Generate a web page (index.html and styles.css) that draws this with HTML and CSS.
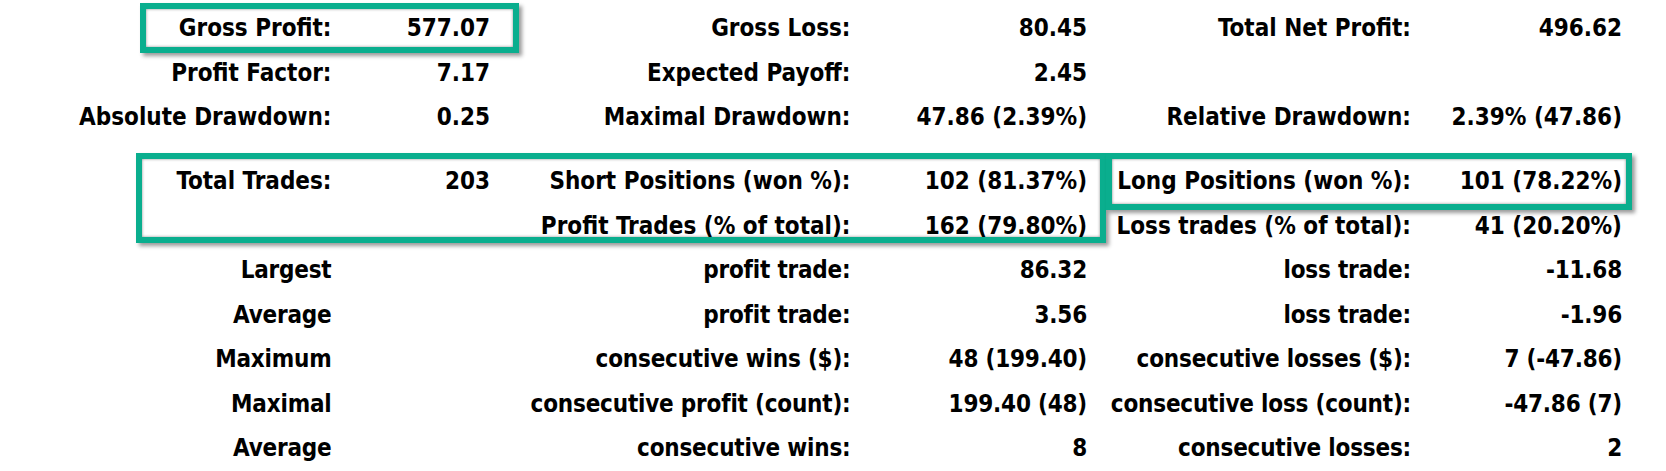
FILE: index.html
```html
<!DOCTYPE html>
<html>
<head>
<meta charset="utf-8">
<link rel="stylesheet" href="styles.css">
</head>
<body>
<div class="report">
  <div class="grid top">
    <div class="c">Gross Profit:</div><div class="c">577.07</div>
    <div class="c">Gross Loss:</div><div class="c">80.45</div>
    <div class="c">Total Net Profit:</div><div class="c">496.62</div>

    <div class="c">Profit Factor:</div><div class="c">7.17</div>
    <div class="c">Expected Payoff:</div><div class="c">2.45</div>
    <div class="c"></div><div class="c"></div>

    <div class="c">Absolute Drawdown:</div><div class="c">0.25</div>
    <div class="c">Maximal Drawdown:</div><div class="c">47.86 (2.39%)</div>
    <div class="c">Relative Drawdown:</div><div class="c">2.39% (47.86)</div>
  </div>
  <div class="grid bottom">
    <div class="c">Total Trades:</div><div class="c">203</div>
    <div class="c">Short Positions (won %):</div><div class="c">102 (81.37%)</div>
    <div class="c">Long Positions (won %):</div><div class="c">101 (78.22%)</div>

    <div class="c"></div><div class="c"></div>
    <div class="c">Profit Trades (% of total):</div><div class="c">162 (79.80%)</div>
    <div class="c">Loss trades (% of total):</div><div class="c">41 (20.20%)</div>

    <div class="c n">Largest</div><div class="c"></div>
    <div class="c n">profit trade:</div><div class="c n">86.32</div>
    <div class="c n">loss trade:</div><div class="c n">-11.68</div>

    <div class="c n">Average</div><div class="c"></div>
    <div class="c n">profit trade:</div><div class="c n">3.56</div>
    <div class="c n">loss trade:</div><div class="c n">-1.96</div>

    <div class="c n">Maximum</div><div class="c"></div>
    <div class="c n">consecutive wins ($):</div><div class="c n">48 (199.40)</div>
    <div class="c n">consecutive losses ($):</div><div class="c n">7 (-47.86)</div>

    <div class="c n">Maximal</div><div class="c"></div>
    <div class="c n">consecutive profit (count):</div><div class="c n">199.40 (48)</div>
    <div class="c n">consecutive loss (count):</div><div class="c n">-47.86 (7)</div>

    <div class="c n">Average</div><div class="c"></div>
    <div class="c n">consecutive wins:</div><div class="c n">8</div>
    <div class="c n">consecutive losses:</div><div class="c n">2</div>
  </div>
  <div class="hl hl-gross"></div>
  <div class="hl hl-trades"></div>
  <div class="hl hl-long"></div>
</div>
</body>
</html>
```

FILE: styles.css
```css
html, body {
  margin: 0;
  padding: 0;
  background: #ffffff;
}
body {
  width: 1666px;
  height: 471px;
  overflow: hidden;
}
.report {
  position: relative;
  padding-top: 6px;
  font-family: "DejaVu Sans Condensed", "DejaVu Sans", sans-serif;
  font-stretch: condensed;
  font-weight: bold;
  font-size: 24px;
  color: #000;
}
.grid {
  display: grid;
  grid-template-columns: 331.5px 158.5px 360.5px 236.5px 324px 211px;
  grid-auto-rows: 44.5px;
  line-height: 44.5px;
}
.top {
  margin-bottom: 19.5px;
}
.c {
  text-align: right;
  white-space: nowrap;
}
.n {
  letter-spacing: -0.2px;
}
.hl {
  position: absolute;
  border: 6px solid #0aae8e;
  box-shadow: 3px 3px 4px rgba(0, 0, 0, 0.4), inset 0 0 3px rgba(0, 0, 0, 0.45);
  pointer-events: none;
}
.hl-gross {
  left: 140px;
  top: 3px;
  width: 367px;
  height: 38px;
}
.hl-trades {
  left: 136px;
  top: 153px;
  width: 958px;
  height: 78px;
}
.hl-long {
  left: 1106px;
  top: 153px;
  width: 514px;
  height: 45px;
}
```
